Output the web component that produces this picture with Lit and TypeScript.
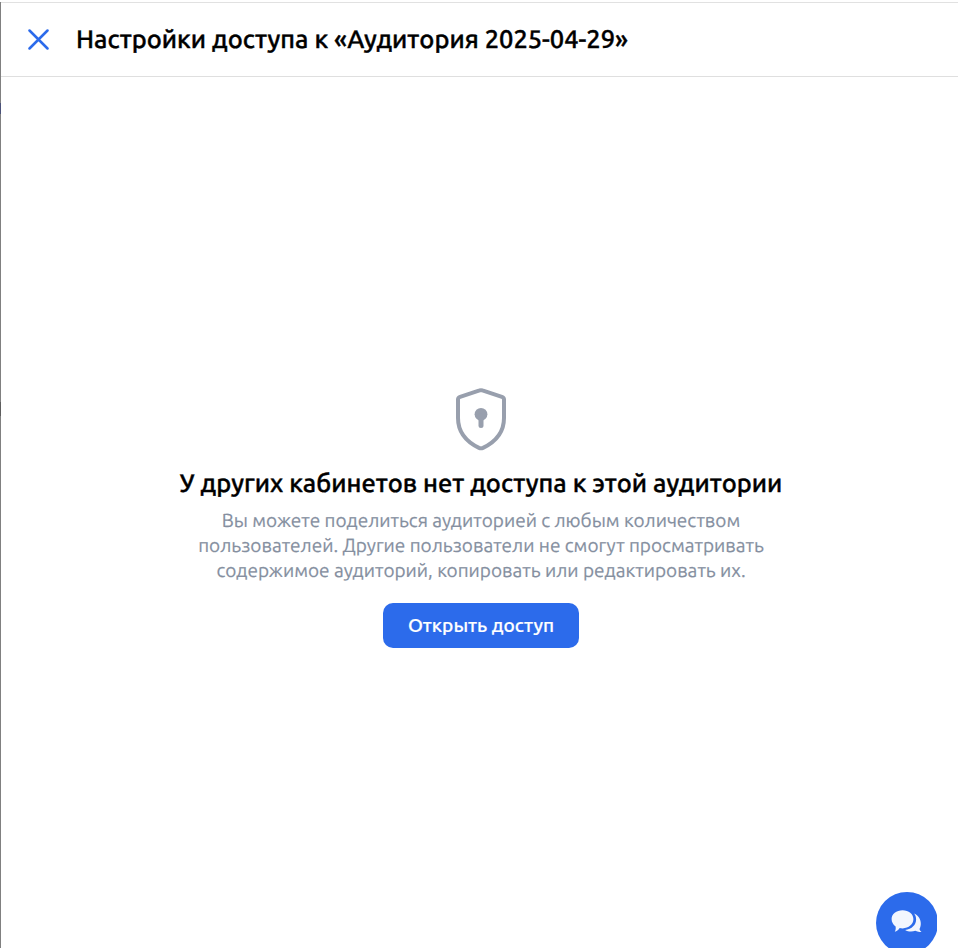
import { LitElement, html, css, svg } from "lit";
import { customElement } from "lit/decorators.js";

const closeIcon = svg`<path d="M2 2 L20 20 M20 2 L2 20" fill="none" stroke="#2c6beb" stroke-width="2.5" stroke-linecap="round" />`;

@customElement("access-header")
export class AccessHeader extends LitElement {
  static styles = css`
    :host {
      display: flex;
      align-items: center;
      box-sizing: border-box;
      height: 75px;
      margin-top: 2px;
      padding-left: 26px;
      gap: 27px;
      border-top: 1px solid #e1e1e1;
      border-bottom: 1px solid #dfdfdf;
    }
    .close {
      display: block;
      width: 22px;
      height: 22px;
      padding: 0;
      border: 0;
      background: none;
    }
    .close svg { display: block; }
    .title {
      margin: 0 0 2px;
      font-size: 25.45px;
      line-height: 32px;
      font-weight: 500;
      -webkit-text-stroke: 0.4px currentColor;
      white-space: nowrap;
    }
  `;
  render() {
    return html`
      <button class="close" aria-label="Закрыть"><svg width="22" height="22" viewBox="-0.5 0.5 22 22">${closeIcon}</svg></button>
      <h1 class="title">Настройки доступа к «Аудитория 2025-04-29»</h1>
    `;
  }
}

@customElement("access-empty")
export class AccessEmpty extends LitElement {
  static styles = css`
    :host {
      display: flex;
      flex-direction: column;
      align-items: center;
      padding: 310px 0 0 3px;
      text-align: center;
    }
    .shield { display: block; }
    .heading {
      margin: 16px 0 0;
      font-size: 25.45px;
      line-height: 32px;
      font-weight: 500;
      -webkit-text-stroke: 0.4px currentColor;
      white-space: nowrap;
    }
    .text {
      margin: 9px 0 0;
      font-size: 19px;
      line-height: 25px;
      color: #858f9f;
      -webkit-text-stroke: 0.2px currentColor;
      white-space: nowrap;
    }
    .line { display: block; }
    .action {
      width: 196px;
      height: 45px;
      margin-top: 20px;
      padding: 0 0 2px;
      border: 0;
      border-radius: 10px;
      background: #2c6beb;
      color: #fff;
      font: inherit;
      font-size: 19.1px;
      font-weight: 500;
      -webkit-text-stroke: 0.2px currentColor;
      white-space: nowrap;
    }
  `;
  render() {
    return html`
      <svg class="shield" width="52" height="64" viewBox="0 0 52 64">
        <path d="M24.6 3.4 L5.1 9.8 Q3 10.5 3 12.6 V31 C3 45 11.4 54.8 24 60.9 Q26 61.8 28 60.9 C40.6 54.8 49 45 49 31 V12.6 Q49 10.5 46.9 9.8 L27.4 3.4 Q26 2.9 24.6 3.4 Z" fill="none" stroke="#989fad" stroke-width="4" stroke-linejoin="round" />
        <circle cx="26" cy="27.3" r="6.4" fill="#989fad" />
        <path d="M26 29 V38.5" stroke="#989fad" stroke-width="5" stroke-linecap="round" />
      </svg>
      <h2 class="heading">У других кабинетов нет доступа к этой аудитории</h2>
      <p class="text">
        <span class="line">Вы можете поделиться аудиторией с любым количеством</span>
        <span class="line">пользователей. Другие пользователи не смогут просматривать</span>
        <span class="line">содержимое аудиторий, копировать или редактировать их.</span>
      </p>
      <button class="action">Открыть доступ</button>
    `;
  }
}

@customElement("app-root")
export class AppRoot extends LitElement {
  static styles = css`
    :host {
      display: block;
      position: relative;
      box-sizing: border-box;
      width: 958px;
      height: 948px;
      overflow: hidden;
      padding-left: 1px;
      background: linear-gradient(#808080, #808080) 0 2px / 1px 100% no-repeat #fff;
      color: #000;
      font-family: "Ubuntu", "Noto Sans", sans-serif;
      text-rendering: geometricPrecision;
    }
    .page { display: flow-root; }
    .mark {
      position: absolute;
      left: 0;
      width: 1px;
    }
    .mark-top { top: 103px; height: 11px; background: #4b5279; }
    .mark-mid { top: 402px; height: 14px; background: #5e5e5e; }
    .chat {
      position: absolute;
      left: 876px;
      top: 892px;
      width: 61px;
      height: 62px;
      overflow: hidden;
    }
    .chat svg { display: block; }
  `;
  render() {
    return html`
      <div class="page">
        <access-header></access-header>
        <access-empty></access-empty>
      </div>
      <span class="mark mark-top"></span>
      <span class="mark mark-mid"></span>
      <div class="chat">
        <svg width="62" height="62" viewBox="0 0 62 62">
          <circle cx="31" cy="31" r="31" fill="#2c6beb" />
          <path d="M38 21.5 C42.5 23.500 45 27.5 44.8 32 C44.7 34 44.2 35.7 43.5 37 C43.8 38.3 44.6 39.2 45.5 39.7 C43.5 40.2 41.3 39.9 39.3 38.8 C36 40 32 39.7 29.1 38 C36 37 40.1 32.8 40.1 27.5 C40.1 25.2 39.5 23.3 38 21.5 Z" fill="#f2f6fe" />
          <path d="M26.6 18.2 C32.7 18.2 37.4 22 37.4 27.1 C37.4 32.3 32.7 36.4 26.6 36.4 C25.5 36.4 24.6 36.3 23.7 36.1 C22.3 38.2 20.6 39.5 18.8 39.7 C19.7 38.1 19.9 36.4 19.6 34.5 C17 32.7 15.6 30 15.6 27.1 C15.6 22 20.4 18.2 26.6 18.2 Z" fill="#f2f6fe" />
        </svg>
      </div>
    `;
  }
}
